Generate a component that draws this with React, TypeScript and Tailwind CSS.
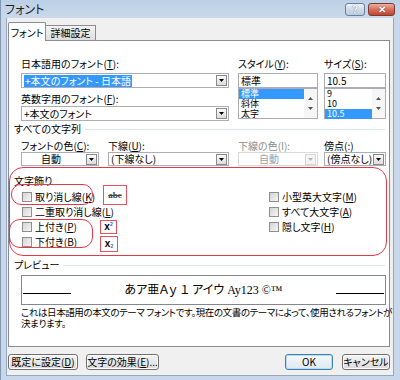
import React from "react"

const jp = "font-['Noto_Sans_CJK_JP',sans-serif] [font-feature-settings:'palt']"

const Arrow = ({ disabled = false }: { disabled?: boolean }) => (
  <div
    className={`mr-px flex h-[11px] w-[11px] shrink-0 items-center justify-center border ${
      disabled ? "border-[#d6d6d6] bg-[#f4f4f4]" : "border-[#8a8a8a] bg-linear-to-b from-[#fbfbfb] to-[#dcdcdc]"
    }`}
  >
    <svg width="5" height="3" viewBox="0 0 5 3">
      <path d="M0 0h5L2.5 3z" fill={disabled ? "#b4b4b4" : "#000"} />
    </svg>
  </div>
)

interface ComboProps {
  w: string
  h?: string
  center?: boolean
  disabled?: boolean
  children: React.ReactNode
}

const Combo = ({ w, h = "h-[15px]", center, disabled, children }: ComboProps) => (
  <div className={`flex items-center border bg-white ${h} ${w} ${disabled ? "border-[#d9d9d9]" : "border-[#abadb3]"}`}>
    <div
      className={`flex min-w-0 flex-1 items-center whitespace-nowrap text-[10px] leading-[12px] ${
        center ? "justify-center pr-[6px]" : "pl-[2px]"
      } ${disabled ? "text-[#a0a0a0]" : "text-black"}`}
    >
      {children}
    </div>
    <Arrow disabled={disabled} />
  </div>
)

const Label = ({ children, className = "", gray = false }: { children: React.ReactNode; className?: string; gray?: boolean }) => (
  <div className={`whitespace-nowrap text-[10px] leading-[12px] ${gray ? "text-[#8d8d8d]" : "text-black"} ${className}`}>{children}</div>
)

const ScrollArrows = () => (
  <div className="flex w-[13px] shrink-0 flex-col items-center justify-between bg-[#f6f6f6] py-[8px]">
    <svg width="5" height="3" viewBox="0 0 5 3">
      <path d="M0 3h5L2.5 0z" fill="#555" />
    </svg>
    <svg width="5" height="3" viewBox="0 0 5 3">
      <path d="M0 0h5L2.5 3z" fill="#555" />
    </svg>
  </div>
)

const ListBox = ({ items, selected }: { items: string[]; selected: number }) => (
  <div className="flex h-[31px] border border-[#abadb3] bg-white">
    <div className="flex flex-1 flex-col">
      {items.map((it, i) => (
        <div
          key={it}
          className={`h-[10px] pl-[2px] text-[9px] leading-[10px] ${i === selected ? "bg-[#3399ff] text-white" : "text-black"}`}
        >
          {it}
        </div>
      ))}
    </div>
    <ScrollArrows />
  </div>
)

const Check = ({ children }: { children: React.ReactNode }) => (
  <div className="flex h-[15px] items-center gap-[3px]">
    <div className="h-[10px] w-[10px] border border-[#8e8f8f] bg-linear-to-br from-[#d4d4d4] to-[#f6f6f6]" />
    <span className="whitespace-nowrap text-[10px] leading-[12px] text-black">{children}</span>
  </div>
)

const Button = ({ children, w, primary }: { children: React.ReactNode; w: string; primary?: boolean }) => (
  <div
    className={`flex h-[16px] items-center justify-center whitespace-nowrap rounded-[3px] border text-[10px] leading-[12px] text-black ${w} ${
      primary
        ? "border-[#3c7fb1] bg-linear-to-b from-[#f4f8fb] to-[#dfe9f1] shadow-[inset_0_0_0_1px_#b9dcf3]"
        : "border-[#707070] bg-linear-to-b from-[#f4f4f4] to-[#dcdcdc] shadow-[inset_0_0_0_1px_#fcfcfc]"
    }`}
  >
    {children}
  </div>
)

export default function App() {
  return (
    <div className={`flex h-[380px] w-[400px] flex-col overflow-hidden border-l border-[#8397b0] bg-[#c8d7e9] ${jp}`}>
      {/* title bar */}
      <div className="flex h-[18px] shrink-0 items-start justify-between bg-linear-to-b from-[#bcd0e6] to-[#cad9ea]">
        <div className="pl-[4px] pt-[2px] text-[12px] leading-[14px] text-[#1e1e1e]">フォント</div>
        <div className="flex gap-[3px] pr-[5px] pt-[3px]">
          <div className="flex h-[13px] w-[20px] items-center justify-center rounded-[3px] border border-[#6b7f98] bg-linear-to-b from-[#eef3f9] via-[#d0dbe8] to-[#bccde0] font-['Liberation_Sans',sans-serif] text-[10px] font-bold leading-none text-white [text-shadow:0_0_1px_#3e5068]">
            ?
          </div>
          <div className="flex h-[13px] w-[27px] items-center justify-center rounded-[3px] border border-[#7a3a30] bg-linear-to-b from-[#eab0a2] via-[#d46f5d] to-[#c2432d] font-['Liberation_Sans',sans-serif] text-[10px] font-bold leading-none text-white [text-shadow:0_0_1px_#4a1a12]">
            ✕
          </div>
        </div>
      </div>

      {/* client */}
      <div className="mb-[4px] ml-[5px] mr-[6px] flex flex-1 flex-col border-x border-b border-[#95a8bf] bg-[#f0f0f0] pl-[1px] pr-[3px] pt-[4px]">
        {/* tabs */}
        <div className="flex h-[18px] items-end">
          <div className="relative z-10 -mb-px flex h-[19px] w-[38px] items-start justify-center rounded-t-[2px] border border-b-0 border-[#898c95] bg-white pt-[4px] text-[10px] leading-[12px]">
            フォント
          </div>
          <div className="flex h-[15px] w-[50px] items-start justify-center border border-b-0 border-l-0 border-[#898c95] bg-linear-to-b from-[#f3f3f3] to-[#dedede] pt-[1px] text-[10px] leading-[12px]">
            詳細設定
          </div>
        </div>

        {/* panel */}
        <div className="flex h-[307px] flex-col border border-[#898c95] bg-white">
          <div className="flex pl-[12px] pt-[17px]">
            <div className="w-[208px]">
              <Label>
                日本語用のフォント(<u>T</u>):
              </Label>
              <div className="mt-[3px]">
                <Combo w="w-[208px]">
                  <span className="bg-[#3399ff] px-[1px] text-white">+本文のフォント - 日本語</span>
                </Combo>
              </div>
              <Label className="mt-[5px]">
                英数字用のフォント(<u>F</u>):
              </Label>
              <div className="mt-px">
                <Combo w="w-[208px]">+本文のフォント</Combo>
              </div>
            </div>
            <div className="ml-[9px] w-[80px]">
              <Label>
                スタイル(<u>Y</u>):
              </Label>
              <div className="mt-[3px] flex h-[15px] items-center border border-[#abadb3] bg-white pl-[2px] text-[10px] leading-[12px]">
                標準
              </div>
              <ListBox items={["標準", "斜体", "太字"]} selected={0} />
            </div>
            <div className="ml-[6px] w-[62px]">
              <Label>
                サイズ(<u>S</u>):
              </Label>
              <div className="mt-[3px] flex h-[15px] items-center border border-[#abadb3] bg-white pl-[2px] text-[10px] leading-[12px]">
                10.5
              </div>
              <ListBox items={["9", "10", "10.5"]} selected={2} />
            </div>
          </div>

          {/* all text */}
          <div className="mt-[2px] flex items-center pl-[5px] pr-[4px]">
            <Label>すべての文字列</Label>
            <div className="ml-[4px] h-px flex-1 bg-[#dde3ea]" />
          </div>
          <div className="mt-[5px] flex pl-[12px]">
            <div className="w-[78px]">
              <Label>
                フォントの色(<u>C</u>):
              </Label>
              <Combo w="w-[78px]" h="h-[14px]" center>
                自動
              </Combo>
            </div>
            <div className="ml-[9px] w-[121px]">
              <Label>
                下線(<u>U</u>):
              </Label>
              <Combo w="w-[121px]" h="h-[14px]">
                (下線なし)
              </Combo>
            </div>
            <div className="ml-[9px] w-[80px]">
              <Label gray>下線の色(I):</Label>
              <Combo w="w-[80px]" h="h-[14px]" center disabled>
                自動
              </Combo>
            </div>
            <div className="ml-[6px] w-[62px]">
              <Label>傍点(:)</Label>
              <Combo w="w-[62px]" h="h-[14px]">
                (傍点なし)
              </Combo>
            </div>
          </div>

          {/* effects, with red annotation marks */}
          <div className="relative mr-[2px] mt-px h-[89px] rounded-[14px] border border-[#e53848] pl-[4px] pt-[7px]">
            <Label>文字飾り</Label>
            <div className="mt-[2px] flex">
              <div className="w-[255px] pl-[8px]">
                <Check>
                  取り消し線(<u>K</u>)
                </Check>
                <Check>
                  二重取り消し線(<u>L</u>)
                </Check>
                <Check>
                  上付き(<u>P</u>)
                </Check>
                <Check>
                  下付き(<u>B</u>)
                </Check>
              </div>
              <div>
                <Check>
                  小型英大文字(<u>M</u>)
                </Check>
                <Check>
                  すべて大文字(<u>A</u>)
                </Check>
                <Check>
                  隠し文字(<u>H</u>)
                </Check>
              </div>
            </div>

            <div className="absolute left-[1px] top-[16px] h-[21px] w-[82px] rounded-[10px] border border-[#e53848]" />
            <div className="absolute left-[-1px] top-[51px] h-[29px] w-[84px] rounded-[11px] border border-[#e53848]" />
            <div className="absolute left-[93px] top-[17px] flex h-[20px] w-[24px] items-center justify-center border-[1.5px] border-[#e8505c] bg-white font-['Liberation_Serif',serif] text-[9px] font-bold leading-none text-[#444] line-through">
              abc
            </div>
            <div className="absolute left-[90px] top-[52px] flex h-[14px] w-[17px] items-center justify-center border-[1.5px] border-[#e8505c] bg-white font-['Liberation_Sans',sans-serif] text-[10px] font-bold leading-none text-black">
              x<span className="-mt-[5px] text-[5px] text-[#2a62c9]">2</span>
            </div>
            <div className="absolute left-[90px] top-[68px] flex h-[16px] w-[18px] items-center justify-center border-[1.5px] border-[#e8505c] bg-white font-['Liberation_Sans',sans-serif] text-[10px] font-bold leading-none text-black">
              x<span className="mt-[5px] text-[5px] text-[#2a62c9]">2</span>
            </div>
          </div>

          {/* preview */}
          <div className="mt-[3px] flex items-center pl-[5px] pr-[4px]">
            <Label>プレビュー</Label>
            <div className="ml-[4px] h-px flex-1 bg-[#dde3ea]" />
          </div>
          <div className="ml-[12px] mt-[4px] flex h-[30px] w-[365px] items-center justify-between border border-[#828790] bg-white px-[1px]">
            <div className="mt-[7px] h-px w-[48px] bg-black" />
            <div className="font-['Liberation_Serif','Noto_Sans_CJK_JP',serif] text-[12px] leading-[14px] text-black">
              あア亜Ａｙ １ アイウ Ay123 ©™
            </div>
            <div className="mt-[7px] h-px w-[48px] bg-black" />
          </div>
          <div className="ml-[12px] mt-[2px] w-[372px] whitespace-nowrap text-[9.5px] leading-[11px] tracking-[-0.4px] text-black">
            これは日本語用の本文のテーマ フォントです。現在の文書のテーマによって、使用されるフォントが
            <br />
            決まります。
          </div>
        </div>

        {/* buttons */}
        <div className="mt-[7px] flex items-center">
          <Button w="w-[70px]">
            既定に設定(<u>D</u>)
          </Button>
          <div className="ml-[8px]">
            <Button w="w-[73px]">
              文字の効果(<u>E</u>)...
            </Button>
          </div>
          <div className="ml-auto flex gap-[9px]">
            <Button w="w-[48px]" primary>
              OK
            </Button>
            <Button w="w-[48px]">キャンセル</Button>
          </div>
        </div>
      </div>
    </div>
  )
}
